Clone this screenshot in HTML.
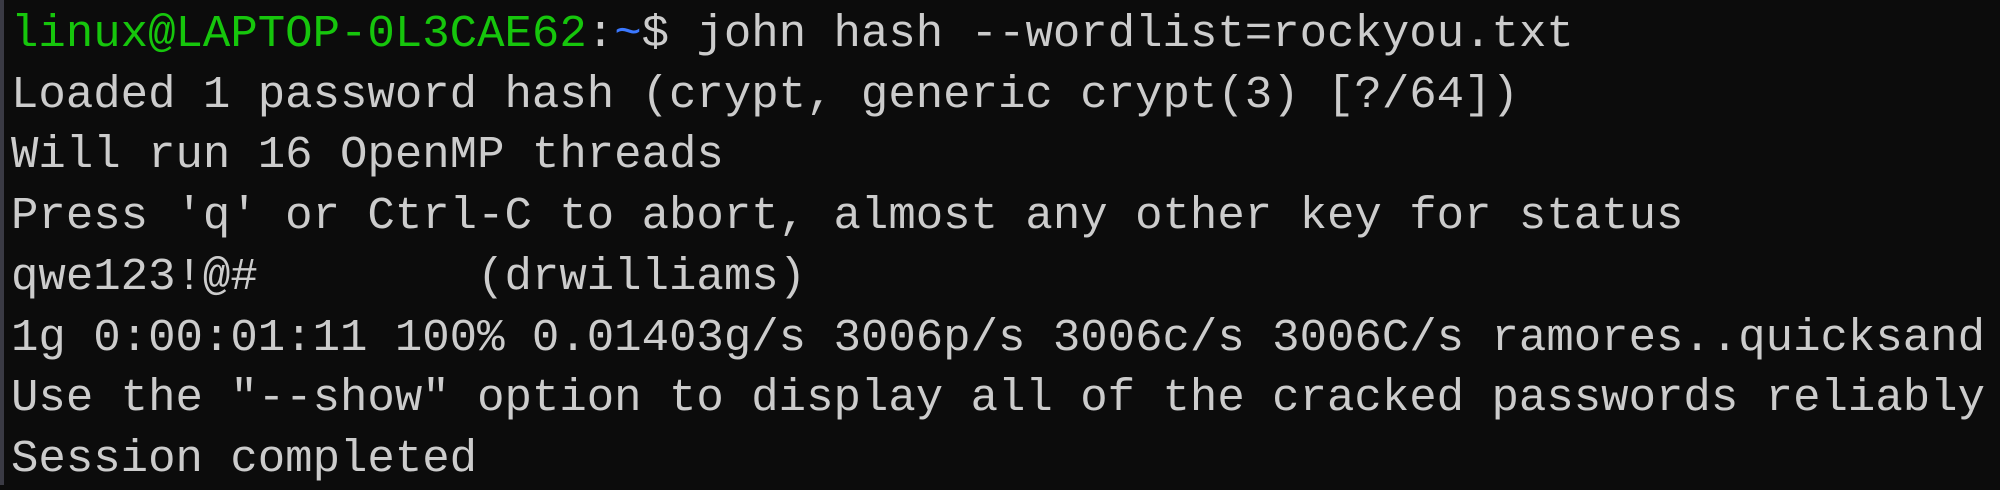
<!DOCTYPE html>
<html><head><meta charset="utf-8"><style>
html,body{margin:0;padding:0;background:#0c0c0c;width:2000px;height:485px;overflow:hidden}
.strip{position:absolute;left:0;top:0;width:4px;height:485px;background:#3a3a44}
pre{position:absolute;left:11px;top:4px;margin:0;font-family:"Liberation Mono",monospace;font-size:45.7px;line-height:60.7px;color:#cccccc;white-space:pre}
.g{color:#16c60c}.b{color:#3b78ff}
</style></head><body><div class="strip"></div><pre><span class="g">linux@LAPTOP-0L3CAE62</span>:<span class="b">~</span>$ john hash --wordlist=rockyou.txt
Loaded 1 password hash (crypt, generic crypt(3) [?/64])
Will run 16 OpenMP threads
Press 'q' or Ctrl-C to abort, almost any other key for status
qwe123!@#        (drwilliams)
1g 0:00:01:11 100% 0.01403g/s 3006p/s 3006c/s 3006C/s ramores..quicksand
Use the "--show" option to display all of the cracked passwords reliably
Session completed</pre></body></html>
